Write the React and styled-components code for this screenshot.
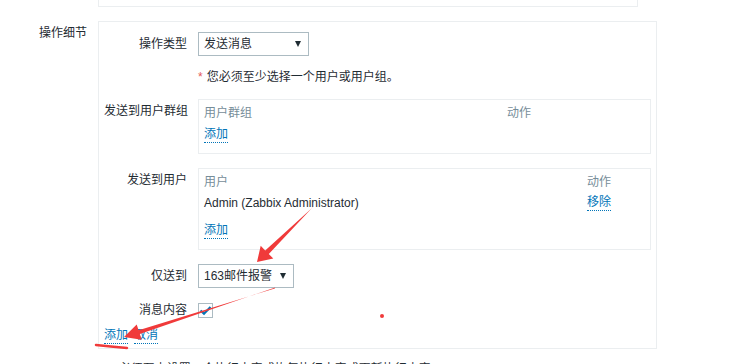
import styled, { createGlobalStyle } from "styled-components";

const GlobalStyle = createGlobalStyle`
  body {
    margin: 0;
    background: #fff;
    font-family: "Liberation Sans", "Noto Sans CJK SC", sans-serif;
    font-size: 12px;
    color: #1f2c33;
  }
`;

const Page = styled.div`
  position: relative;
  width: 729px;
  height: 364px;
  overflow: hidden;
`;

const TopStub = styled.div`
  margin-left: 98px;
  width: 538px;
  height: 6px;
  border: 1px solid #ebeef0;
  border-top: none;
`;

const FormGrid = styled.div`
  display: grid;
  grid-template-columns: 98px 559px;
  margin-top: 14px;
`;

const SectionLabel = styled.div`
  text-align: right;
  padding: 5px 11px 0 0;
  line-height: 14px;
`;

const Panel = styled.div`
  border: 1px solid #ebeef0;
  padding: 10px 5px 0 5px;
`;

const FieldRow = styled.div`
  display: grid;
  grid-template-columns: 83px 1fr;
  column-gap: 11px;
  margin-top: ${(p) => p.$gap || 0}px;
  align-items: ${(p) => (p.$top ? "start" : "center")};
`;

const FieldLabel = styled.div`
  text-align: right;
  line-height: ${(p) => (p.$top ? "14px" : "24px")};
  padding-top: ${(p) => (p.$top ? "5px" : "0")};
  white-space: nowrap;
`;

const Select = styled.div`
  position: relative;
  box-sizing: border-box;
  width: ${(p) => p.$width}px;
  height: 24px;
  line-height: 22px;
  border: 1px solid #acbbc2;
  padding-left: 5px;
  &::after {
    content: "";
    position: absolute;
    right: 7px;
    top: 8px;
    border-left: 3.5px solid transparent;
    border-right: 3.5px solid transparent;
    border-top: 6px solid #1f2c33;
  }
`;

const Hint = styled.div`
  line-height: 24px;
`;

const Star = styled.span`
  color: #e45959;
  margin-right: 4px;
`;

const TableBox = styled.div`
  border: 1px solid #ebeef0;
  padding: 0 5px;
  padding-bottom: ${(p) => p.$pb}px;
`;

const TRow = styled.div`
  display: grid;
  grid-template-columns: ${(p) => p.$first}px 1fr;
  height: ${(p) => p.$h}px;
  line-height: ${(p) => p.$h}px;
  margin-top: ${(p) => p.$mt || 0}px;
  color: ${(p) => (p.$head ? "#768d99" : "#1f2c33")};
`;

const LinkText = styled.span`
  color: #0275b8;
  border-bottom: 1px dotted #0275b8;
  line-height: 14px;
  display: inline-block;
  padding-bottom: 1px;
`;

const Cell = styled.div`
  display: flex;
  align-items: center;
`;

const Checkbox = styled.div`
  box-sizing: border-box;
  width: 15px;
  height: 15px;
  border: 1px solid #acbbc2;
  display: flex;
  align-items: center;
  justify-content: center;
`;

const Buttons = styled.div`
  display: flex;
  gap: 6px;
  height: 24px;
  align-items: center;
  margin-top: 2px;
`;

const Footnote = styled.div`
  margin: 13px 0 0 110px;
  line-height: 14px;
  white-space: nowrap;
`;

const Overlay = styled.svg`
  position: absolute;
  left: 0;
  top: 0;
  pointer-events: none;
`;

export default function App() {
  return (
    <Page>
      <GlobalStyle />
      <TopStub />
      <FormGrid>
        <SectionLabel>操作细节</SectionLabel>
        <Panel>
          <FieldRow>
            <FieldLabel>操作类型</FieldLabel>
            <Select $width={111}>发送消息</Select>
          </FieldRow>
          <FieldRow $gap={9}>
            <div />
            <Hint>
              <Star>*</Star>您必须至少选择一个用户或用户组。
            </Hint>
          </FieldRow>
          <FieldRow $gap={10} $top>
            <FieldLabel $top>发送到用户群组</FieldLabel>
            <TableBox $pb={9}>
              <TRow $head $first={303} $h={26}>
                <Cell>用户群组</Cell>
                <Cell>动作</Cell>
              </TRow>
              <TRow $first={303} $h={18}>
                <Cell>
                  <LinkText>添加</LinkText>
                </Cell>
              </TRow>
            </TableBox>
          </FieldRow>
          <FieldRow $gap={14} $top>
            <FieldLabel $top>发送到用户</FieldLabel>
            <TableBox $pb={8}>
              <TRow $head $first={383} $h={26}>
                <Cell>用户</Cell>
                <Cell>动作</Cell>
              </TRow>
              <TRow $first={383} $h={16}>
                <Cell>Admin (Zabbix Administrator)</Cell>
                <Cell>
                  <LinkText>移除</LinkText>
                </Cell>
              </TRow>
              <TRow $first={383} $h={20} $mt={10}>
                <Cell>
                  <LinkText>添加</LinkText>
                </Cell>
              </TRow>
            </TableBox>
          </FieldRow>
          <FieldRow $gap={14}>
            <FieldLabel>仅送到</FieldLabel>
            <Select $width={96}>163邮件报警</Select>
          </FieldRow>
          <FieldRow $gap={10}>
            <FieldLabel>消息内容</FieldLabel>
            <Checkbox>
              <svg width="13" height="11" viewBox="0 0 13 11">
                <path d="M1.5 5.5 L5 8.8 L11.5 2" fill="none" stroke="#0275b8" strokeWidth="2.2" />
              </svg>
            </Checkbox>
          </FieldRow>
          <Buttons>
            <LinkText>添加</LinkText>
            <LinkText>取消</LinkText>
          </Buttons>
        </Panel>
      </FormGrid>
      <Footnote>
        <Star>*</Star>必须至少设置一个执行内容或恢复执行内容或更新执行内容。
      </Footnote>
      <Overlay width="729" height="364" viewBox="0 0 729 364">
        <g fill="#f03a3a">
          <polygon points="313.4,206.6 312.6,207.4 265.2,250.4 260.7,245.8 257,262 273.3,258.6 268.8,254" />
          <polygon points="275.2,287.5 274.8,288.5 138.6,330.2 136.7,324.5 124,337 141.7,339.7 139.8,334" />
          <circle cx="382" cy="316" r="2" />
        </g>
        <path d="M96 345 Q110 346.5 127 348" fill="none" stroke="#f03a3a" strokeWidth="2.5" strokeLinecap="round" />
      </Overlay>
    </Page>
  );
}
